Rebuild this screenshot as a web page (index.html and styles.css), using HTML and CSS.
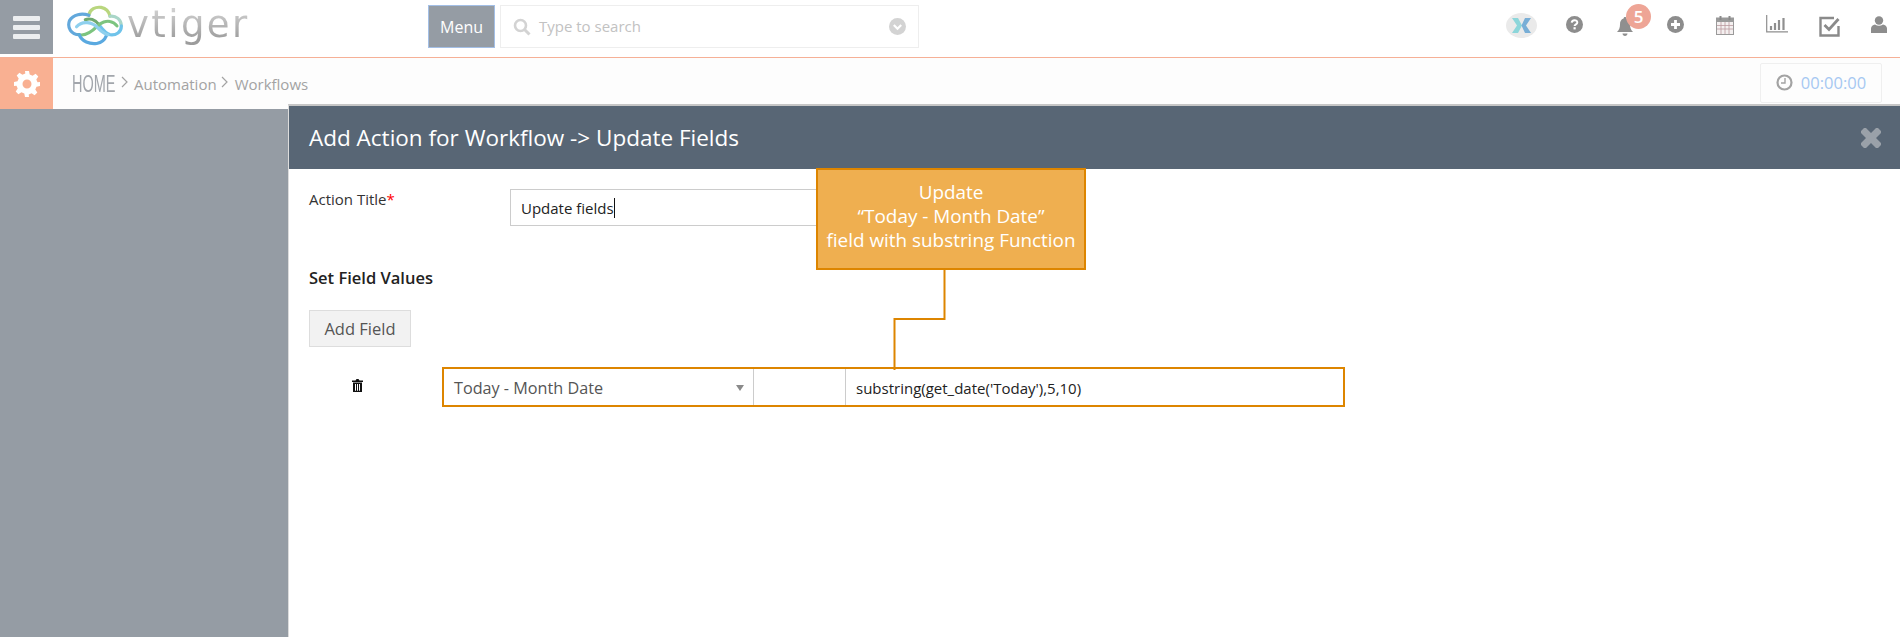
FILE: index.html
```html
<!DOCTYPE html>
<html lang="en">
<head>
<meta charset="utf-8">
<title>Workflows</title>
<link rel="stylesheet" href="styles.css">
</head>
<body>
<header class="topbar">
  <div class="burger"><span></span><span></span><span></span></div>
  <div class="logo">
    <svg class="cloud" width="58" height="44" viewBox="0 0 66 46" fill="none" stroke-width="3.6" stroke-linecap="round">
      <path d="M26 12C27 5 34 2 40 3C45 4 49 8 50 13" stroke="#b9d67e"/>
      <path d="M50 13C57 12 63 17 63 24" stroke="#a9d6c8"/>
      <path d="M63 24C63 31 57 35 50 34C45 33 41 27 37 22" stroke="#6fc3ea"/>
      <path d="M37 22C33 17 27 15 22 17" stroke="#6fa96f"/>
      <path d="M26 12C18 9 8 11 4 18C1 26 6 34 15 34" stroke="#62a8dc"/>
      <path d="M15 34C23 36 30 30 36 24C40 20 46 18 50 19C55 20 58 24 58 24" stroke="#7cc47f"/>
      <path d="M15 34C18 42 27 45 35 44C40 43 44 40 46 35" stroke="#5aa9e0"/>
      <path d="M12 25C18 18 30 19 37 27C41 31 44 33 48 34" stroke="#8fd0ee"/>
    </svg>
    <span class="wordmark">vtiger</span>
  </div>
  <button class="menu-btn" type="button">Menu</button>
  <div class="search">
    <svg width="18" height="18" viewBox="0 0 18 18" fill="none" stroke="#d3d3d3"><circle cx="7.5" cy="7.5" r="5.5" stroke-width="2.6"/><path d="M11.5 11.5L16.5 16.5" stroke-width="3"/></svg>
    <span class="placeholder">Type to search</span>
    <svg class="search-arrow" width="17" height="17" viewBox="0 0 17 17"><circle cx="8.5" cy="8.5" r="8.5" fill="#d3d3d3"/><path d="M4.8 7L8.5 10.7L12.2 7" fill="none" stroke="#fff" stroke-width="2.2"/></svg>
  </div>
  <nav class="tools">
    <span class="avatar"><svg width="31" height="25" viewBox="0 0 31 25"><ellipse cx="15.5" cy="12.5" rx="15.5" ry="12.5" fill="#eaeaea"/><path d="M6 5H12L16 12.5L12 20H6L11 12.5Z" fill="#8cd6da"/><path d="M25 5H19L15.5 12.5L19 20H25L20 12.5Z" fill="#78aed6"/></svg></span>
    <svg class="t-help" width="17" height="17" viewBox="0 0 17 17"><circle cx="8.5" cy="8.5" r="8.5" fill="#8d8d8d"/><path d="M5.7 6.6C5.9 3.6 11.3 3.4 11.3 6.4C11.3 8.4 8.6 8.2 8.6 10" fill="none" stroke="#fff" stroke-width="2"/><rect x="7.5" y="11.2" width="2.2" height="2.2" fill="#fff"/></svg>
    <span class="bell">
      <svg width="16" height="20" viewBox="0 0 16 20"><path d="M8 0C9 0 9.4.7 9.4 1.6C12 2.3 13 4.6 13 7.5C13 11 14 13 16 15H0C2 13 3 11 3 7.5C3 4.6 4 2.3 6.6 1.6C6.6.7 7 0 8 0Z" fill="#8f8f8f"/><path d="M5.5 16.5H10.5C10.5 18 9.4 19 8 19S5.5 18 5.5 16.5Z" fill="#8f8f8f"/></svg>
      <span class="badge">5</span>
    </span>
    <svg class="t-plus" width="17" height="17" viewBox="0 0 17 17"><circle cx="8.5" cy="8.5" r="8.5" fill="#8d8d8d"/><path d="M8.5 4V13M4 8.5H13" stroke="#fff" stroke-width="2.8"/></svg>
    <svg class="t-cal" width="18" height="20" viewBox="0 0 18 20" fill="none"><rect x=".5" y="3" width="17" height="16.5" fill="#f4f0f0" stroke="#9a9a9a"/><rect x=".5" y="3" width="17" height="4" fill="#9a9a9a"/><path d="M4.5 1V5M13.5 1V5" stroke="#8a8a8a" stroke-width="2"/><path d="M1 10.5H17M1 14H17M5 7V19M9 7V19M13 7V19" stroke="#bb9aa0" stroke-width=".8"/></svg>
    <svg class="t-chart" width="22" height="18" viewBox="0 0 22 18" fill="none"><path d="M.7 0V16.8H22" stroke="#8f8f8f" stroke-width="1.2"/><path d="M5 11V15M9 8V15M13 5V15M17.5 3V15" stroke="#8f8f8f" stroke-width="2.2"/></svg>
    <svg class="t-check" width="21" height="21" viewBox="0 0 21 21" fill="none"><path d="M19.5 10V19.5H1.5V2H15" stroke="#8a8a8a" stroke-width="2.4"/><path d="M5.5 9L10 13.5L19.5 3" stroke="#8a8a8a" stroke-width="2.8"/></svg>
    <svg class="t-user" width="16" height="17" viewBox="0 0 16 17"><circle cx="8" cy="4.5" r="4.2" fill="#8d8d8d"/><path d="M0 17V12.5C0 10 2 9 4 8.5C6.5 10.2 9.5 10.2 12 8.5C14 9 16 10 16 12.5V17Z" fill="#8d8d8d"/></svg>
  </nav>
</header>
<div class="subbar">
  <div class="gear">
    <svg width="26" height="26" viewBox="0 0 26 26"><path fill="#fff" fill-rule="evenodd" d="M11 0H15L15.7 3.5L18.6 4.7L21.6 2.7L24.3 5.4L22.3 8.4L23.5 11.3L26 11V15L22.5 15.7L21.3 18.6L23.3 21.6L20.6 24.3L17.6 22.3L14.7 23.5L15 26H11L10.3 22.5L7.4 21.3L4.4 23.3L1.7 20.6L3.7 17.6L2.5 14.7L0 15V11L3.5 10.3L4.7 7.4L2.7 4.4L5.4 1.7L8.4 3.7L11.3 2.5ZM13 8.5A4.5 4.5 0 1 0 13 17.5A4.5 4.5 0 1 0 13 8.5Z"/></svg>
  </div>
  <div class="crumbs">
    <span class="home-slot"><span class="home">HOME</span></span>
    <svg class="chev chev-a" width="7" height="12" viewBox="0 0 7 12" fill="none"><path d="M1 1L6 6L1 11" stroke="#a3a3a3" stroke-width="1.2"/></svg>
    <span class="crumb">Automation</span>
    <svg class="chev chev-b" width="7" height="12" viewBox="0 0 7 12" fill="none"><path d="M1 1L6 6L1 11" stroke="#a3a3a3" stroke-width="1.2"/></svg>
    <span class="crumb">Workflows</span>
  </div>
  <div class="timer">
    <svg width="17" height="17" viewBox="0 0 17 17" fill="none" stroke="#a3a3a3"><circle cx="8.5" cy="8.5" r="7" stroke-width="2.2"/><path d="M9 4V9H5" stroke-width="1.4"/></svg>
    <span>00:00:00</span>
  </div>
</div>
<main class="main">
  <aside class="sidebar"></aside>
  <section class="panel">
    <div class="panel-head">
      <h1>Add Action for Workflow -&gt; Update Fields</h1>
      <svg class="close" width="20" height="20" viewBox="0 0 20 20"><path d="M3 8L0 5V3L3 0H5L10 5L15 0H17L20 3V5L15 10L20 15V17L17 20H15L10 15L5 20H3L0 17V15L5 10L0 5Z" fill="#9aa1a9"/></svg>
    </div>
    <div class="panel-body">
      <div class="title-row">
        <label class="title-label">Action Title<em>*</em></label>
        <div class="title-input"><span>Update fields</span><i class="caret"></i></div>
      </div>
      <h2>Set Field Values</h2>
      <button class="add-field" type="button">Add Field</button>
      <div class="field-row">
        <svg class="trash" width="11" height="13" viewBox="0 0 11 13"><path fill="#111" fill-rule="evenodd" d="M3.5 1.5L4.5 0H6.5L7.5 1.5H11V3H0V1.5ZM1 3.6H10V13H1ZM3 5V11.8H4V5ZM5 5V11.8H6V5ZM7 5V11.8H8V5Z"/></svg>
        <div class="field-box">
          <div class="f-select"><span>Today - Month Date</span><i class="tri"></i></div>
          <div class="f-mid"></div>
          <div class="f-value">substring(get_date('Today'),5,10)</div>
        </div>
      </div>
    </div>
    <div class="callout">Update<br>“Today - Month Date”<br>field with substring Function</div>
    <svg class="connector" width="54" height="100" viewBox="0 0 54 100" fill="none"><path d="M51.5 0V49H1.5V100" stroke="#dd8500" stroke-width="2"/></svg>
  </section>
</main>
</body>
</html>
```
FILE: styles.css
```css
* { box-sizing: border-box; }
html, body { margin: 0; padding: 0; height: 100%; }
body { width: 1900px; height: 637px; overflow: hidden; background: #fff; font-family: "Open Sans", sans-serif; font-size: 14px; color: #2c2c2c; display: flex; flex-direction: column; }

.topbar { height: 58px; flex: none; display: flex; align-items: flex-start; border-bottom: 1px solid #f6b096; background: #fff; }
.burger { width: 53px; height: 54px; background: #959ca4; display: flex; flex-direction: column; justify-content: center; gap: 4px; padding: 0 13px; }
.burger span { height: 5px; border-radius: 1px; background: #eceef0; }
.logo { width: 375px; height: 54px; display: flex; align-items: flex-start; padding-left: 13px; }
.cloud { margin-top: 3px; flex: none; }
.wordmark { font-family: "DejaVu Sans", sans-serif; font-size: 37px; line-height: 50px; height: 50px; letter-spacing: 2.4px; margin-left: 3px; background: linear-gradient(#cfcfcf 20%, #9c9c9c 80%); -webkit-background-clip: text; background-clip: text; color: transparent; }
.menu-btn { width: 67px; height: 43px; margin-top: 5px; padding: 0; background: #959ca4; border: 1px solid #a3bfe6; color: #fff; font: 16px "Open Sans", sans-serif; }
.search { width: 419px; height: 43px; margin: 5px 0 0 5px; border: 1px solid #eeeeee; display: flex; align-items: center; padding: 0 12px; }
.placeholder { margin: -2px 0 0 8px; color: #c2c2c2; font-size: 15px; flex: 1; }
.tools { flex: 1; height: 54px; position: relative; }
.tools > * { position: absolute; }
.avatar { left: 587px; top: 13px; line-height: 0; }
.t-help { left: 647px; top: 16px; }
.bell { left: 698px; top: 17px; line-height: 0; }
.badge { position: absolute; left: 9px; top: -13px; width: 25px; height: 25px; border-radius: 50%; background: #eea596; color: #fff; font-size: 17px; font-weight: 600; line-height: 25px; text-align: center; }
.t-plus { left: 748px; top: 16px; }
.t-cal { left: 797px; top: 15px; }
.t-chart { left: 847px; top: 15px; }
.t-check { left: 900px; top: 16px; }
.t-user { left: 952px; top: 16px; }

.subbar { height: 51px; flex: none; display: flex; align-items: center; background: #fdfdfd; }
.gear { width: 53px; height: 51px; background: #f9b092; display: flex; align-items: center; justify-content: center; }
.crumbs { flex: 1; display: flex; align-items: center; padding-left: 19px; color: #a3a3a3; }
.home-slot { width: 43px; height: 26px; flex: none; overflow: visible; }
.home { display: inline-block; font-family: "Liberation Sans", sans-serif; font-size: 23px; line-height: 26px; color: #a2a6ac; transform: scaleX(0.63); transform-origin: left center; }
.chev { flex: none; margin-top: -3px; }
.chev-a { margin-left: 6px; margin-right: 6px; }
.chev-b { margin-left: 4px; margin-right: 7px; }
.crumb { font-size: 15px; color: #a3a3a3; }
.timer { width: 122px; height: 40px; margin-right: 18px; margin-top: -2px; border: 1px solid #efefef; border-radius: 2px; display: flex; align-items: center; justify-content: center; gap: 8px; font-size: 16.5px; color: #a6c8f2; }

.main { flex: 1; display: flex; min-height: 0; }
.sidebar { width: 288px; flex: none; background: #959ca4; }
.panel { flex: 1; margin-top: -5px; position: relative; background: #fff; border-top: 2px solid #c6c6c6; border-left: 1px solid #dcdcdc; }
.panel-head { height: 63px; background: #586675; display: flex; align-items: center; justify-content: space-between; padding: 0 19px 0 20px; color: #fff; }
.panel-head h1 { margin: 0; font-size: 22.5px; font-weight: 400; }
.panel-body { padding: 20px 18px 0 20px; }
.title-row { display: flex; height: 37px; }
.title-label { width: 201px; margin-top: 1px; color: #333; font-size: 15px; line-height: 18px; }
.title-label em { color: #f00; font-style: normal; }
.title-input { width: 500px; height: 37px; border: 1px solid #ccc; padding: 0 10px; display: flex; align-items: center; color: #222; font-size: 15px; }
.caret { width: 1px; height: 20px; background: #111; }
.panel-body h2 { margin: 42px 0 0; font-size: 16.5px; font-weight: 600; line-height: 20px; color: #222; }
.add-field { display: block; width: 102px; height: 37px; margin-top: 22px; padding: 0; background: #f2f2f2; border: 1px solid #ddd; color: #555; font: 16.5px "Open Sans", sans-serif; }
.field-row { display: flex; align-items: flex-start; margin-top: 20px; }
.trash { margin: 12px 0 0 43px; flex: none; }
.field-box { width: 903px; height: 40px; margin-left: 79px; border: 2px solid #dd8500; display: flex; background: #fff; }
.f-select { width: 310px; border-right: 1px solid #ccc; display: flex; align-items: center; justify-content: space-between; padding: 2px 9px 0 10px; color: #555; font-size: 16.2px; }
.tri { width: 0; height: 0; border: 4px solid transparent; border-top: 6px solid #8a8a8a; border-bottom: 0; }
.f-mid { width: 92px; border-right: 1px solid #ccc; }
.f-value { flex: 1; display: flex; align-items: center; padding: 1px 0 0 10px; color: #222; font-size: 15px; }

.callout { position: absolute; left: 527px; top: 62px; width: 270px; height: 102px; background: #efaf50; border: 2px solid #dd8500; color: #fff; font-size: 18.9px; line-height: 24px; text-align: center; padding-top: 10px; }
.connector { position: absolute; left: 604px; top: 164px; }
```
